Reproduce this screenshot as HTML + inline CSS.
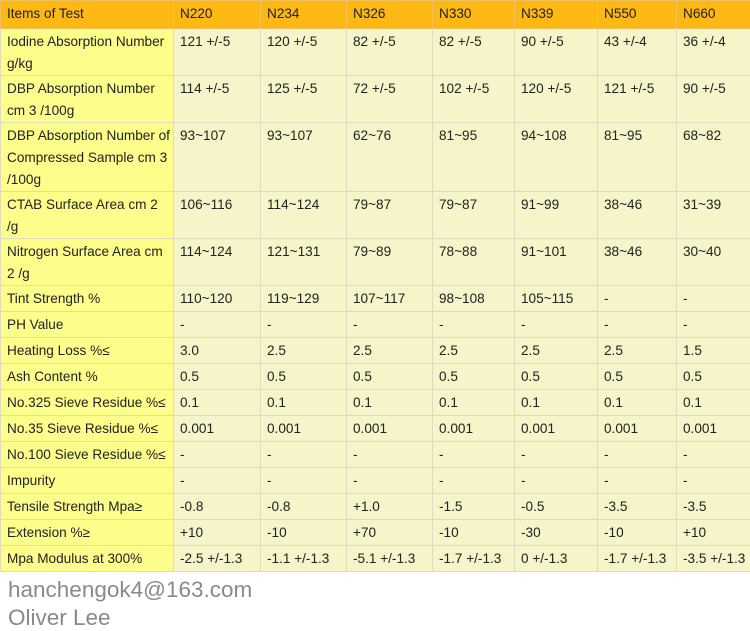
<!DOCTYPE html>
<html><head><meta charset="utf-8"><style>
html,body{margin:0;padding:0;background:#fff;width:750px;height:631px;overflow:hidden}
table{border-collapse:collapse;table-layout:fixed;width:750px;font-family:"Liberation Sans",Arial,sans-serif;font-size:13.6px;color:#222}
td{border:1px solid #dedbc0;padding:2px 0 0 6px;vertical-align:top;line-height:22px;background:#f6f4c9;overflow:hidden;white-space:nowrap;box-sizing:border-box}
td:first-child{background:#fdfd8c}
tr.h td{background:#fdb813;border-color:#f0c060}
.f{position:absolute;left:8px;font-family:"Liberation Sans",Arial,sans-serif;color:#8a8a8a;font-size:22.5px}
</style></head><body>
<table>
<colgroup><col style="width:173px"><col style="width:87px"><col style="width:86px"><col style="width:86px"><col style="width:82px"><col style="width:83px"><col style="width:79px"><col style="width:74px"></colgroup>
<tr class="h" style="height:28px"><td>Items of Test</td><td>N220</td><td>N234</td><td>N326</td><td>N330</td><td>N339</td><td>N550</td><td>N660</td></tr>
<tr style="height:47px"><td>Iodine Absorption Number<br>g/kg</td><td>121 +/-5</td><td>120 +/-5</td><td>82 +/-5</td><td>82 +/-5</td><td>90 +/-5</td><td>43 +/-4</td><td>36 +/-4</td></tr>
<tr style="height:47px"><td>DBP Absorption Number<br>cm 3 /100g</td><td>114 +/-5</td><td>125 +/-5</td><td>72 +/-5</td><td>102 +/-5</td><td>120 +/-5</td><td>121 +/-5</td><td>90 +/-5</td></tr>
<tr style="height:68px"><td>DBP Absorption Number of<br>Compressed Sample cm 3<br>/100g</td><td>93~107</td><td>93~107</td><td>62~76</td><td>81~95</td><td>94~108</td><td>81~95</td><td>68~82</td></tr>
<tr style="height:46px"><td>CTAB Surface Area cm 2<br>/g</td><td>106~116</td><td>114~124</td><td>79~87</td><td>79~87</td><td>91~99</td><td>38~46</td><td>31~39</td></tr>
<tr style="height:47px"><td>Nitrogen Surface Area cm<br>2 /g</td><td>114~124</td><td>121~131</td><td>79~89</td><td>78~88</td><td>91~101</td><td>38~46</td><td>30~40</td></tr>
<tr style="height:26px"><td>Tint Strength %</td><td>110~120</td><td>119~129</td><td>107~117</td><td>98~108</td><td>105~115</td><td>-</td><td>-</td></tr>
<tr style="height:26px"><td>PH Value</td><td>-</td><td>-</td><td>-</td><td>-</td><td>-</td><td>-</td><td>-</td></tr>
<tr style="height:26px"><td>Heating Loss %≤</td><td>3.0</td><td>2.5</td><td>2.5</td><td>2.5</td><td>2.5</td><td>2.5</td><td>1.5</td></tr>
<tr style="height:26px"><td>Ash Content %</td><td>0.5</td><td>0.5</td><td>0.5</td><td>0.5</td><td>0.5</td><td>0.5</td><td>0.5</td></tr>
<tr style="height:26px"><td>No.325 Sieve Residue %≤</td><td>0.1</td><td>0.1</td><td>0.1</td><td>0.1</td><td>0.1</td><td>0.1</td><td>0.1</td></tr>
<tr style="height:26px"><td>No.35 Sieve Residue %≤</td><td>0.001</td><td>0.001</td><td>0.001</td><td>0.001</td><td>0.001</td><td>0.001</td><td>0.001</td></tr>
<tr style="height:26px"><td>No.100 Sieve Residue %≤</td><td>-</td><td>-</td><td>-</td><td>-</td><td>-</td><td>-</td><td>-</td></tr>
<tr style="height:26px"><td>Impurity</td><td>-</td><td>-</td><td>-</td><td>-</td><td>-</td><td>-</td><td>-</td></tr>
<tr style="height:26px"><td>Tensile Strength Mpa≥</td><td>-0.8</td><td>-0.8</td><td>+1.0</td><td>-1.5</td><td>-0.5</td><td>-3.5</td><td>-3.5</td></tr>
<tr style="height:26px"><td>Extension %≥</td><td>+10</td><td>-10</td><td>+70</td><td>-10</td><td>-30</td><td>-10</td><td>+10</td></tr>
<tr style="height:26px"><td>Mpa Modulus at 300%</td><td>-2.5 +/-1.3</td><td>-1.1 +/-1.3</td><td>-5.1 +/-1.3</td><td>-1.7 +/-1.3</td><td>0 +/-1.3</td><td>-1.7 +/-1.3</td><td>-3.5 +/-1.3</td></tr>
</table>
<div class="f" style="top:577px">hanchengok4@163.com</div>
<div class="f" style="top:605px">Oliver Lee</div>
</body></html>
